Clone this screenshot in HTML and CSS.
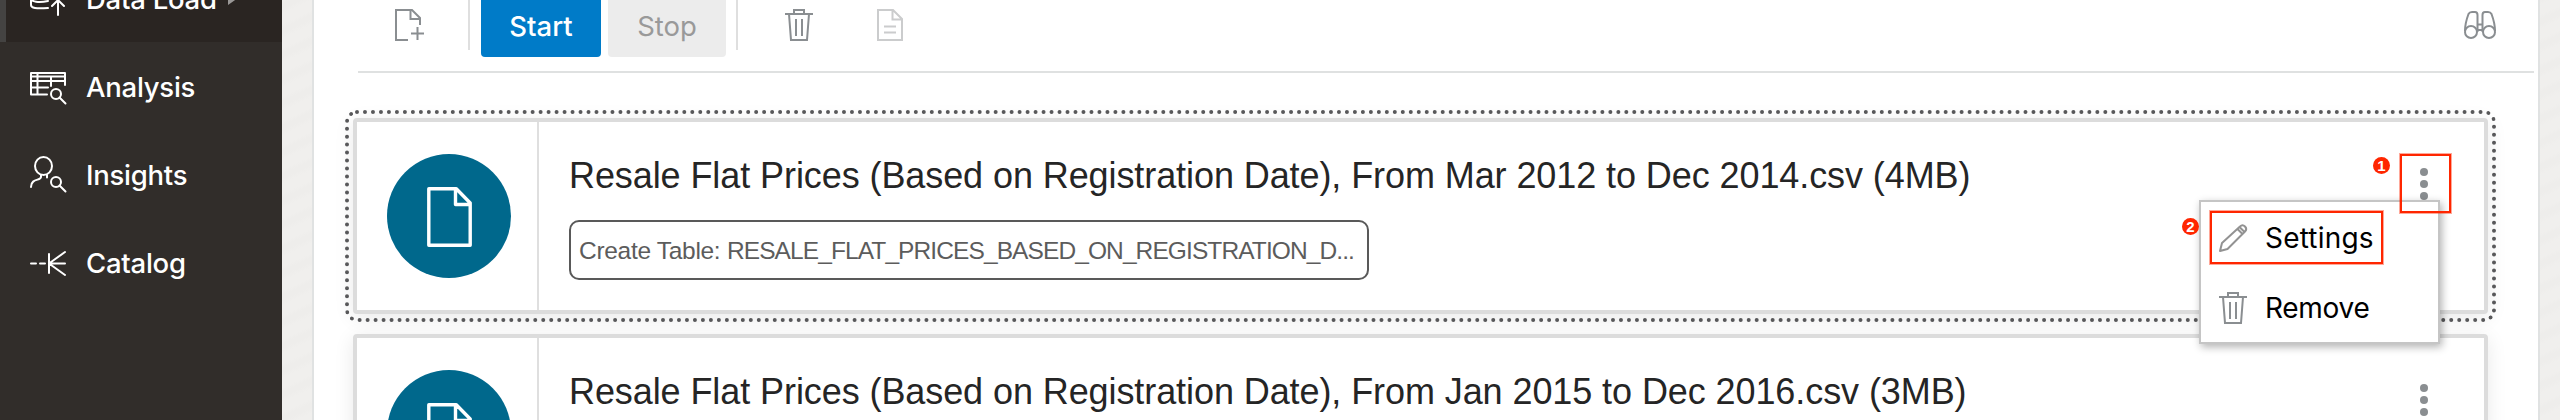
FILE: index.html
```html
<!DOCTYPE html>
<html lang="en">
<head>
<meta charset="utf-8">
<title>Data Load</title>
<link rel="stylesheet" href="styles.css">
</head>
<body>
<svg class="defs" width="0" height="0">
  <symbol id="trash" viewBox="0 0 28 32"><path d="M0 5h28M9 5V1h10v4M4 5l2 26h16l2-26M11 10v17M17 10v17"/></symbol>
  <symbol id="file" viewBox="0 0 45 60"><path d="M1.8 1.8h27.5L43.2 16v42.2H1.8zM28.5 2v15.500h14.500"/></symbol>
</svg>
<div class="app">
  <nav class="sidebar">
    <a class="item active">
      <svg class="nav-icon" viewBox="0 0 36 36"><path d="M1 8v17c0 3 5 4 17 3M1 18c0 4 8 5 17 3M28 35V20M22 26l6-6 6 6"/><ellipse cx="12" cy="8" rx="11" ry="4"/></svg>
      <span class="label">Data Load</span><i class="arrow"></i>
    </a>
    <a class="item">
      <svg class="nav-icon" viewBox="0 0 36 36"><path d="M17 26.500H1V5h34v12M1 8.500h34M1 13h34M1 19.500h17M7.500 5v21M21 9v9M29.500 29.500l6 6"/><circle cx="26" cy="26" r="5"/></svg>
      <span class="label">Analysis</span>
    </a>
    <a class="item">
      <svg class="nav-icon" viewBox="0 0 36 36"><ellipse cx="13.500" cy="10" rx="8.500" ry="9"/><path d="M11 19v2c0 4-10 1-10 10M17 19v2.500M29.500 29.500l6 6"/><circle cx="26" cy="26" r="5"/></svg>
      <span class="label">Insights</span>
    </a>
    <a class="item">
      <svg class="nav-icon" viewBox="0 0 36 36"><path d="M1 19.500h5M10 19.500h5M19 10v19M19 19.500h16M19 19.500L35 8M19 19.500l16 11.500"/></svg>
      <span class="label">Catalog</span>
    </a>
  </nav>
  <main class="panel">
    <div class="toolbar">
      <svg class="tool add" viewBox="0 0 29 32"><path d="M13 31H1V1h16l8 8v7M15.500 1v9H25M22.500 18v13M16 24.500h13"/></svg>
      <i class="sep"></i>
      <button class="btn start">Start</button>
      <button class="btn stop">Stop</button>
      <i class="sep sep2"></i>
      <svg class="tool trash"><use href="#trash"/></svg>
      <svg class="tool doc" viewBox="0 0 26 32"><path d="M1 1h15l9 9v21H1zM15.500 1v9.500H25M7 17.500h12M7 23.500h12"/></svg>
      <svg class="tool find" viewBox="0 0 32 28"><circle cx="7" cy="21" r="6"/><circle cx="25" cy="21" r="6"/><path d="M1 20C1 14 3 7 4.500 3Q5.500 1 8 1h3q2.500 0 2.500 3v17M31 20c0-6-2-13-3.500-17Q26.500 1 24 1h-3q-2.500 0-2.500 3v17M13.500 13.500h5M13.500 19h5"/></svg>
    </div>
    <section class="list">
      <article class="card selected">
        <div class="thumb"><div class="disc"><svg class="file"><use href="#file"/></svg></div></div>
        <div class="info">
          <h2 class="title">Resale Flat Prices (Based on Registration Date), From Mar 2012 to Dec 2014.csv (4MB)</h2>
          <div class="pill"><span class="action">Create Table: </span><span>RESALE_FLAT_PRICES_BASED_ON_REGISTRATION_D...</span></div>
        </div>
        <div class="more"><i></i><i></i><i></i></div>
      </article>
      <article class="card">
        <div class="thumb"><div class="disc"><svg class="file"><use href="#file"/></svg></div></div>
        <div class="info">
          <h2 class="title">Resale Flat Prices (Based on Registration Date), From Jan 2015 to Dec 2016.csv (3MB)</h2>
        </div>
        <div class="more"><i></i><i></i><i></i></div>
      </article>
    </section>
  </main>
  <div class="menu">
    <div class="menu-row">
      <svg class="pencil" viewBox="0 0 28 28"><path d="M1 27l2-8L21 2.500q2.500-2.500 5 0t0 5L8.500 25zM18.500 5l5 5M20.500 3l5 5"/></svg>
      <span class="settings">Settings</span>
    </div>
    <div class="menu-row">
      <svg class="tool"><use href="#trash"/></svg>
      <span class="remove">Remove</span>
    </div>
  </div>
  <div class="mark mark-more"></div>
  <div class="mark mark-settings"></div>
  <b class="badge badge-1">1</b>
  <b class="badge badge-2">2</b>
</div>
</body>
</html>
```
FILE: styles.css
```css
* { box-sizing: border-box; }
body { margin: 0; overflow: hidden; font-family: Inter, sans-serif; }
.defs { position: absolute; }
svg { fill: none; flex: none; overflow: visible; }
.app {
  position: relative; display: flex; width: 2560px; height: 420px; overflow: hidden;
  background: repeating-linear-gradient(155deg, #f0efed 0 9px, #eeedeb 13px 17px, #f0efed 22px);
}

.sidebar { width: 282px; height: 466px; margin-top: -46px; flex: none; background: #312d2a; }
.item {
  display: flex; align-items: center; gap: 20px; height: 88px; padding-left: 30px;
  color: #fff; font-size: 27.500px; font-weight: 500; line-height: 34px; letter-spacing: -.25px; white-space: nowrap;
}
.label { padding-top: 2px; }
.active { background: #2a2522; border-left: 6px solid #444342; padding-left: 24px; }
.nav-icon { width: 36px; height: 36px; stroke: #fff; stroke-width: 2; stroke-linecap: round; stroke-linejoin: round; }
.arrow { margin: 0 0 0 -9px; border-left: 10px solid #9a9897; border-top: 7px solid transparent; border-bottom: 7px solid transparent; }

.panel { width: 2228px; height: 420px; margin-left: 30px; flex: none; background: #fff; border: solid #e0e2e2; border-width: 0 2px; }

.toolbar { display: flex; align-items: flex-start; height: 73px; margin: 0 4px 0 44px; border-bottom: 2px solid #dfe1e1; }
.tool { width: 28px; height: 32px; margin-top: 9px; stroke: #8a8e91; stroke-width: 2; }
.add { width: 29px; margin-left: 37px; }
.sep { width: 2px; height: 50px; margin-left: 44px; background: #dfdfdf; }
.btn { width: 120px; height: 71px; margin: -14px 0 0 11px; padding: 9px 0 0; border: 0; border-radius: 4px; font: 500 27.500px/34px Inter, sans-serif; }
.start { background: #007bc8; color: #fff; }
.stop { width: 118px; margin-left: 7px; background: #ececec; color: #999; font-weight: 400; }
.sep2 { margin-left: 10px; }
.trash { margin-left: 47px; }
.doc { width: 26px; margin-left: 64px; stroke: #cbcccd; }
.find { width: 32px; height: 28px; margin: 11px 38px 0 auto; }

.list { display: flex; flex-direction: column; gap: 20px; padding: 45px 50px 0 39px; }
.card {
  display: flex; height: 196px; flex: none; background: #fff;
  border: 4px solid #dcdcdc; border-radius: 4px;
  box-shadow: 0 4px 20px rgba(0, 0, 0, .09);
}
.selected { outline: 4px dotted #58585a; outline-offset: 4px; }
.thumb { width: 182px; padding: 32px 0 0 30px; border-right: 2px solid #dfdfdf; }
.disc { display: flex; align-items: center; justify-content: center; width: 124px; height: 124px; border-radius: 50%; background: #00688c; }
.file { width: 45px; height: 60px; margin-top: 2px; stroke: #fff; stroke-width: 3.400; stroke-linejoin: round; }
.info { flex: 1; padding: 33px 0 0 30px; }
.title { margin: 0; font: 400 36px/42px "Liberation Sans", Arial, sans-serif; letter-spacing: -.085px; color: #252525; white-space: nowrap; }
.pill { width: 800px; height: 60px; margin-top: 23px; padding: 0 8px; border: 2px solid #595959; border-radius: 10px; font: 400 24.500px/58px "Liberation Sans", Arial, sans-serif; letter-spacing: -.9px; color: #5c5c5c; white-space: pre; }
.action { letter-spacing: -.3px; }
.more { display: flex; flex-direction: column; gap: 4px; width: 8px; margin: 46px 56px 0 0; }
.more i { width: 8px; height: 8px; border-radius: 50%; background: #8a8e91; }

.menu { position: absolute; left: 2199px; top: 200px; width: 241px; height: 144px; padding: 1px 0 0 18px; background: #fff; border: 2px solid #c5c5c5; box-shadow: 2px 3px 8px rgba(0, 0, 0, .3); }
.menu-row { display: flex; align-items: center; gap: 18px; height: 70px; color: #000; font-size: 28px; line-height: 34px; }
.settings { letter-spacing: .2px; }
.remove { letter-spacing: -.3px; }
.menu-row .tool { margin: 0; }
.pencil { width: 28px; height: 28px; stroke: #929292; stroke-width: 2; stroke-linejoin: round; }
.mark { position: absolute; border: 2px solid #ff2600; box-shadow: 0 0 0 1px rgba(255, 38, 0, .4); }
.mark-more { left: 2400px; top: 154px; width: 51px; height: 59px; }
.mark-settings { left: 2210px; top: 211px; width: 173px; height: 53px; }
.badge { position: absolute; width: 17px; height: 17px; border-radius: 50%; background: #ff2600; color: #fff; font: 700 15px/17px "Liberation Sans", Arial, sans-serif; text-align: center; }
.badge-1 { left: 2373px; top: 157px; }
.badge-2 { left: 2182px; top: 218px; }
```
